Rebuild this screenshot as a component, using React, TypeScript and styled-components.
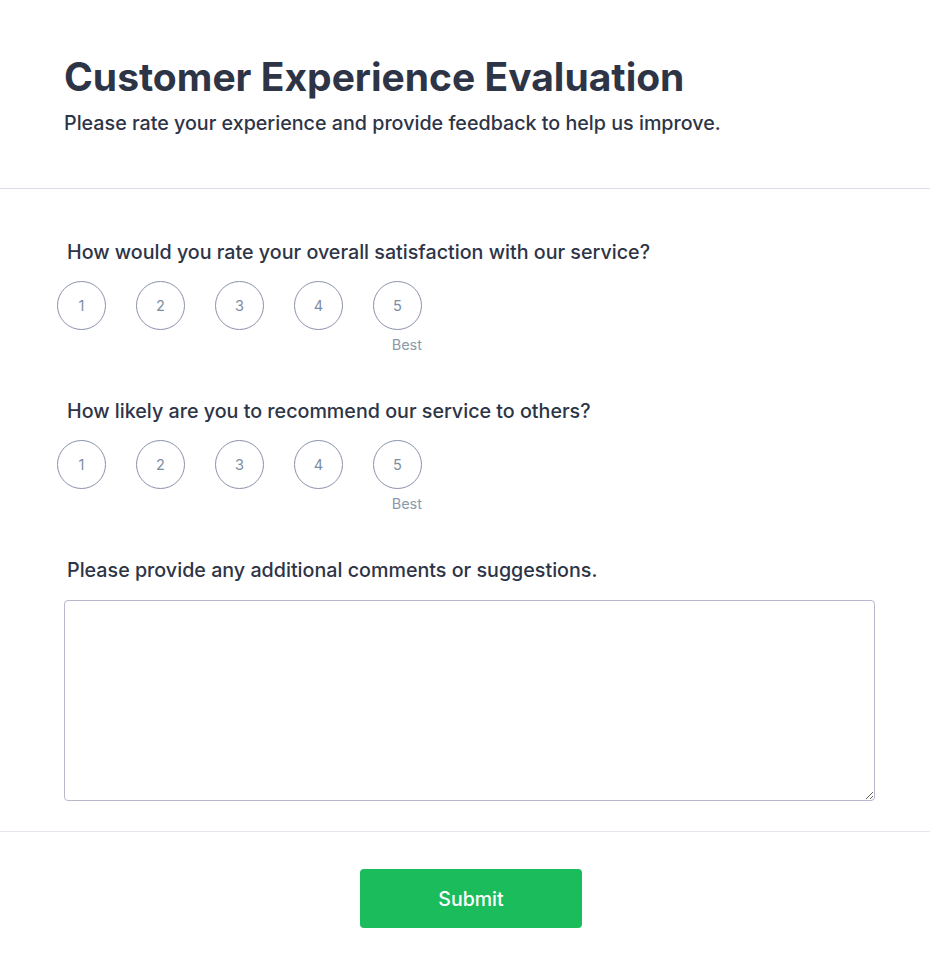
import styled, { createGlobalStyle } from "styled-components";

const GlobalStyle = createGlobalStyle`
  body {
    margin: 0;
    background: #ffffff;
    font-family: Inter, "Noto Sans", sans-serif;
    color: #2d3446;
  }
`;

const Page = styled.div`
  width: 100%;
  display: flex;
  flex-direction: column;
`;

const Header = styled.header`
  padding: 54px 64px 52px;
  border-bottom: 1px solid #dcdce6;
`;

const Title = styled.h1`
  margin: 0;
  font-size: 39px;
  font-weight: 700;
  line-height: 46px;
  color: #2d3446;
`;

const Subtitle = styled.p`
  margin: 10px 0 0;
  font-size: 19.7px;
  font-weight: 500;
  line-height: 26px;
  color: #2d3446;
`;

const Body = styled.main`
  padding: 50px 55px 30px 64px;
  display: flex;
  flex-direction: column;
  border-bottom: 1px solid #e6e6ee;
`;

const Question = styled.div`
  display: flex;
  flex-direction: column;
  margin-bottom: 45px;
`;

const Label = styled.label<{ $gap?: number }>`
  padding-left: 3px;
  font-size: 19.7px;
  font-weight: 500;
  line-height: 26px;
  color: #2d3446;
  margin-bottom: ${(p) => p.$gap ?? 16}px;
`;

const Scale = styled.div`
  display: flex;
  gap: 30px;
  margin-left: -7px;
`;

const Option = styled.div`
  display: flex;
  flex-direction: column;
  align-items: flex-end;
`;

const Circle = styled.button`
  width: 49px;
  height: 49px;
  border-radius: 50%;
  border: 1px solid #8a92aa;
  background: #ffffff;
  color: #7d8ca3;
  font-family: Inter, sans-serif;
  font-size: 14.5px;
  padding: 0;
  cursor: pointer;
`;

const Hint = styled.span`
  margin-top: 6px;
  font-size: 14.5px;
  line-height: 17px;
  color: #8a9aa8;
  min-height: 17px;
`;

const Comments = styled.textarea`
  width: 100%;
  box-sizing: border-box;
  height: 201px;
  border: 1px solid #b8b8cc;
  border-radius: 4px;
  resize: vertical;
  font-family: Inter, sans-serif;
  font-size: 16px;
  padding: 10px;
`;

const Footer = styled.footer`
  display: flex;
  justify-content: center;
  padding: 37px 55px 40px 67px;
`;

const SubmitButton = styled.button`
  width: 222px;
  height: 59px;
  border: none;
  border-radius: 4px;
  background: #1abc5c;
  color: #ffffff;
  font-family: Inter, sans-serif;
  font-size: 19.5px;
  font-weight: 500;
  cursor: pointer;
`;

const ratings = [1, 2, 3, 4, 5];

const RatingQuestion = ({ label }: { label: string }) => (
  <Question>
    <Label>{label}</Label>
    <Scale>
      {ratings.map((n) => (
        <Option key={n}>
          <Circle type="button">{n}</Circle>
          <Hint>{n === 5 ? "Best" : ""}</Hint>
        </Option>
      ))}
    </Scale>
  </Question>
);

const App = () => (
  <Page>
    <GlobalStyle />
    <Header>
      <Title>Customer Experience Evaluation</Title>
      <Subtitle>
        Please rate your experience and provide feedback to help us improve.
      </Subtitle>
    </Header>
    <Body>
      <RatingQuestion label="How would you rate your overall satisfaction with our service?" />
      <RatingQuestion label="How likely are you to recommend our service to others?" />
      <Label $gap={17}>Please provide any additional comments or suggestions.</Label>
      <Comments />
    </Body>
    <Footer>
      <SubmitButton type="button">Submit</SubmitButton>
    </Footer>
  </Page>
);

export default App;
